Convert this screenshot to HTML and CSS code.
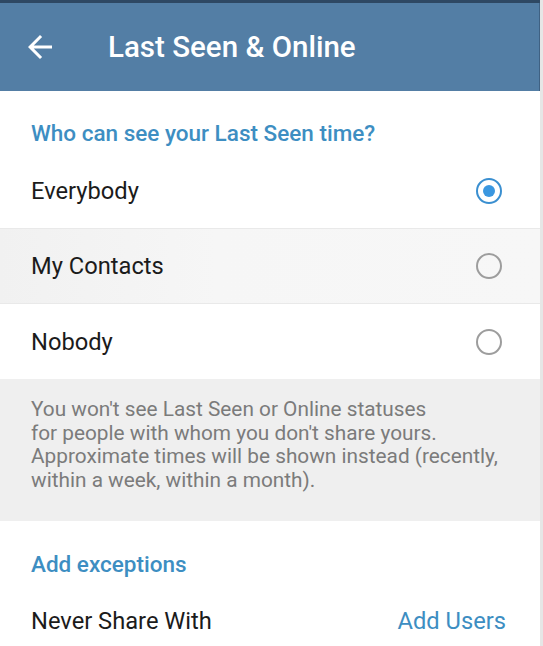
FILE: index.html
```html
<!DOCTYPE html>
<html>
<head>
<meta charset="utf-8">
<link rel="stylesheet" href="styles.css">
</head>
<body>
<div class="screen">
  <div class="topline"></div>
  <header class="appbar">
    <svg class="back" viewBox="0 0 24 24" width="36" height="36"><path d="M20 11H7.83l5.59-5.59L12 4l-8 8 8 8 1.41-1.41L7.83 13H20v-2z" fill="#fff"/></svg>
    <h1 class="title">Last Seen &amp; Online</h1>
  </header>

  <section class="card">
    <div class="section-title first">Who can see your Last Seen time?</div>
    <div class="row">
      <span class="label">Everybody</span>
      <span class="radio checked"></span>
    </div>
    <div class="row pressed">
      <span class="label">My Contacts</span>
      <span class="radio"></span>
    </div>
    <div class="row last">
      <span class="label">Nobody</span>
      <span class="radio"></span>
    </div>
  </section>

  <div class="info">You won't see Last Seen or Online statuses<br>for people with whom you don't share yours.<br>Approximate times will be shown instead (recently,<br>within a week, within a month).</div>

  <section class="card">
    <div class="section-title second">Add exceptions</div>
    <div class="row action">
      <span class="label">Never Share With</span>
      <span class="link">Add Users</span>
    </div>
  </section>
</div>
</body>
</html>
```

FILE: styles.css
```css
html, body {
  margin: 0;
  padding: 0;
}
body {
  width: 543px;
  height: 646px;
  overflow: hidden;
  background: #e6e6e6;
  font-family: Roboto, "Noto Sans", "Liberation Sans", sans-serif;
}
.screen {
  width: 540px;
  height: 646px;
  background: #ffffff;
  overflow: hidden;
}
.topline {
  height: 3px;
  background: #2e4863;
}
.appbar {
  height: 88px;
  background: #537ea5;
  display: flex;
  align-items: center;
  box-sizing: border-box;
  border-right: 1px solid #3f6183;
}
.back {
  margin-left: 22px;
  flex: none;
}
.title {
  margin: 0 0 0 50px;
  color: #ffffff;
  font-size: 29.5px;
  font-weight: 500;
}
.card {
  background: #fff;
}
.section-title {
  color: #3d8ec2;
  font-size: 22.5px;
  font-weight: 500;
  line-height: 26px;
  padding-left: 31px;
}
.section-title.first {
  padding-top: 29px;
  padding-bottom: 7px;
}
.section-title.second {
  padding-top: 30px;
  padding-bottom: 6px;
}
.row {
  height: 75px;
  display: flex;
  align-items: center;
  justify-content: space-between;
  padding: 0 38px 0 31px;
  box-sizing: border-box;
}
.row + .row {
  border-top: 1px solid #e9e9e9;
}
.row.pressed {
  background: linear-gradient(90deg, #f1f1f1, #f6f6f6 40%, #f7f7f7);
}
.row.last {
  height: 76px;
}
.label {
  font-size: 23.7px;
  color: #1b1b1b;
}
.radio {
  width: 22px;
  height: 22px;
  border: 2.5px solid #9d9d9d;
  border-radius: 50%;
  box-sizing: content-box;
  position: relative;
}
.radio.checked {
  border-color: #3a8fd0;
}
.radio.checked::after {
  content: "";
  position: absolute;
  left: 5px;
  top: 5px;
  width: 12px;
  height: 12px;
  border-radius: 50%;
  background: #3a97e0;
}
.info {
  background: #efefef;
  color: #7b7b7b;
  font-size: 20.8px;
  line-height: 23.7px;
  padding: 19px 10px 28px 31px;
  height: 142px;
  box-sizing: border-box;
  white-space: nowrap;
}
.row.action {
  padding-right: 34px;
}
.link {
  color: #3d8ec2;
  font-size: 23.7px;
}
```
